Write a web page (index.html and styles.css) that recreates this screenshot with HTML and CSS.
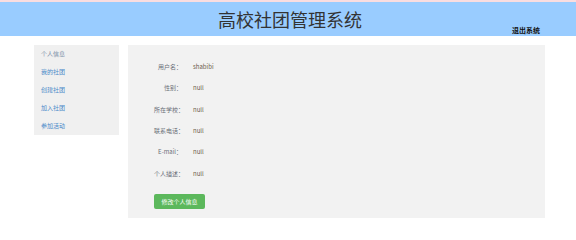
FILE: index.html
```html
<!DOCTYPE html>
<html lang="zh-CN">

<head>
  <meta charset="UTF-8">
  <meta name="viewport" content="width=device-width, initial-scale=1.0">
  <title>高校社团管理系统</title>
  <link rel="stylesheet" href="styles.css">
</head>

<body>
  <div class="topline"></div>
  <header class="header">
    <div></div>
    <h1 class="title">高校社团管理系统</h1>
    <a class="logout" href="#">退出系统</a>
  </header>

  <div class="content">
    <ul class="side">
      <li><a class="current" href="#">个人信息</a></li>
      <li><a href="#">我的社团</a></li>
      <li><a href="#">创建社团</a></li>
      <li><a href="#">加入社团</a></li>
      <li><a href="#">参加活动</a></li>
    </ul>

    <div class="main">
      <div class="info">
        <span class="label">用户名：</span><span class="value">shabibi</span>
        <span class="label">性别：</span><span class="value">null</span>
        <span class="label">所在学校：</span><span class="value">null</span>
        <span class="label">联系电话：</span><span class="value">null</span>
        <span class="label">E-mail：</span><span class="value">null</span>
        <span class="label">个人描述：</span><span class="value">null</span>
      </div>
      <button class="btn">修改个人信息</button>
    </div>
  </div>
</body>

</html>
```

FILE: styles.css
```css
* {
  box-sizing: border-box;
}

body {
  margin: 0;
  font-family: "Noto Sans CJK SC", "Noto Sans", sans-serif;
  background: #fff;
}

.topline {
  height: 2px;
  background: #fadde0;
}

.header {
  display: grid;
  grid-template-columns: 1fr auto 1fr;
  height: 34px;
  background: #99ccff;
}

.title {
  margin: 0;
  font-size: 18px;
  font-weight: 400;
  line-height: 34px;
  color: #333;
  padding-left: 4px;
}

.logout {
  justify-self: end;
  align-self: end;
  margin-right: 36px;
  margin-bottom: 1px;
  font-size: 7px;
  font-weight: bold;
  line-height: 10px;
  color: #111;
  text-decoration: none;
}

.content {
  display: flex;
  align-items: flex-start;
  gap: 9px;
  margin-top: 9px;
  padding-left: 34px;
}

.side {
  width: 85px;
  margin: 0;
  padding: 0 0 0 7px;
  list-style: none;
  background: #f0f0f0;
}

.side li {
  height: 18px;
  line-height: 18px;
  font-size: 6px;
}

.side a {
  color: #4a8ac9;
  text-decoration: none;
}

.side a.current {
  color: #7b8fa6;
}

.main {
  width: 417px;
  height: 173px;
  padding: 11px 0 0 26px;
  background: #f2f2f2;
}

.info {
  display: grid;
  grid-template-columns: 28px 1fr;
  grid-auto-rows: 21.33px;
  column-gap: 11px;
  align-items: center;
  font-size: 6px;
}

.label {
  text-align: right;
  color: #6a6f78;
  white-space: nowrap;
}

.value {
  color: #6d5e4c;
}

.btn {
  display: block;
  width: 51px;
  height: 15px;
  margin-top: 10px;
  padding: 0;
  border: none;
  border-radius: 2px;
  background: #5cb85c;
  color: #fff;
  font-family: inherit;
  font-size: 6px;
}
```
